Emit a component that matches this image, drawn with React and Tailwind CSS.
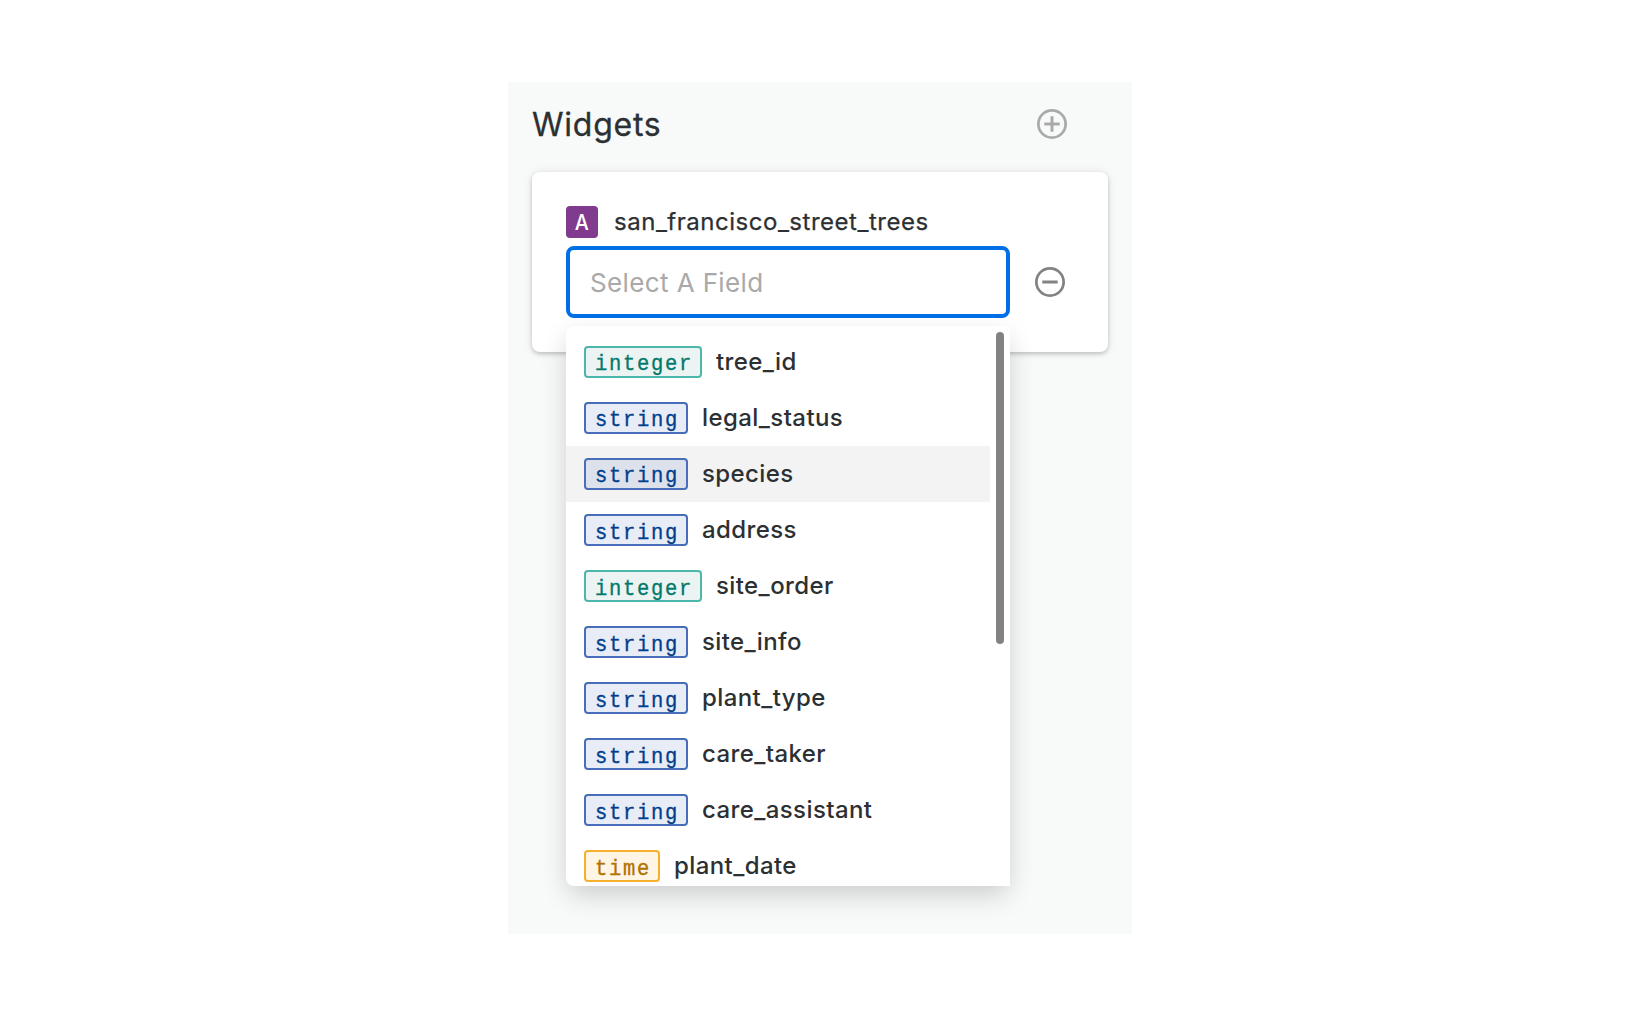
const FIELDS = [
  { type: "integer", name: "tree_id" },
  { type: "string", name: "legal_status" },
  { type: "string", name: "species", active: true },
  { type: "string", name: "address" },
  { type: "integer", name: "site_order" },
  { type: "string", name: "site_info" },
  { type: "string", name: "plant_type" },
  { type: "string", name: "care_taker" },
  { type: "string", name: "care_assistant" },
  { type: "time", name: "plant_date" },
];

const TAG_STYLES = {
  integer: "border-[#4db6ac] bg-[#007860]/8 text-[#00796b]",
  string: "border-[#4a6dba] bg-[#1e46b4]/10 text-[#003f8c]",
  time: "border-[#f5b02e] bg-[#ff9900]/10 text-[#b37100]",
};

function CircleIcon({ plus, className }) {
  return (
    <svg viewBox="0 0 30 30" className={`size-[30px] ${className}`} fill="none" stroke="currentColor">
      <circle cx="15" cy="15" r="13.65" strokeWidth="2.7" />
      <path d={plus ? "M7.3 15h15.4M15 7.3v15.4" : "M7.3 15h15.4"} strokeWidth="3" />
    </svg>
  );
}

function FieldOption({ type, name, active }) {
  return (
    <li className={`flex h-14 w-[424px] shrink-0 items-center gap-3.5 pl-[18px] ${active ? "bg-[#f3f3f3]" : ""}`}>
      <span className={`flex h-8 items-center rounded-[4px] border-2 pt-[5px] pr-[7px] pl-[9px] font-['Liberation_Mono',monospace] text-[20.5px] leading-[22px] tracking-[1.7px] [-webkit-text-stroke:0.3px] ${TAG_STYLES[type]}`}>
        <span className="scale-y-110">{type}</span>
      </span>
      <span className="text-2xl font-medium tracking-[0.4px]">{name}</span>
    </li>
  );
}

export default function App() {
  return (
    <div className="flex h-[1009px] w-full justify-center bg-white pt-[82px] font-['Inter',sans-serif] text-[#2c3033]">
      <main className="h-[852px] w-[624px] overflow-hidden bg-[#f8faf9] px-6">
        <header className="flex h-[90px] items-center justify-between pr-[41px] pb-1.5">
          <h1 className="pt-0.5 text-[32px] leading-10 tracking-[0.75px] [-webkit-text-stroke:0.3px]">Widgets</h1>
          <CircleIcon plus className="text-[#a9a9a9]" />
        </header>
        <section className="h-[180px] rounded-lg bg-white px-[34px] pt-[34px] shadow-[0_2px_4px_rgba(0,0,0,0.2),0_0_12px_rgba(0,0,0,0.08)]">
          <div className="flex h-8 items-center gap-4">
            <span className="flex size-8 items-center justify-center rounded-[4px] bg-[#803a8e] text-[22px] font-medium text-white">
              <span className="scale-x-90">A</span>
            </span>
            <span className="text-2xl tracking-[0.52px] [-webkit-text-stroke:0.25px]">san_francisco_street_trees</span>
          </div>
          <div className="mt-2 flex items-center gap-[25px]">
            <div className="relative">
              <input
                placeholder="Select A Field"
                className="relative z-20 block h-[72px] w-[444px] rounded-lg border-4 border-[#006fe6] bg-white px-5 text-[26px] tracking-[0.38px] outline-none placeholder:text-[#a9a9a9]"
              />
              <div className="absolute top-20 left-0 z-10 h-[560px] w-[444px] rounded-l-lg bg-white shadow-[0_10px_28px_-3px_rgba(0,0,0,0.2)]">
                <ul className="flex h-full flex-col overflow-hidden rounded-l-lg pt-2">
                  {FIELDS.map((field) => (
                    <FieldOption key={field.name} {...field} />
                  ))}
                </ul>
                <div className="absolute top-1.5 right-1.5 h-[312px] w-2 rounded-full bg-[#828282]" />
              </div>
            </div>
            <CircleIcon className="text-[#828282]" />
          </div>
        </section>
      </main>
    </div>
  );
}
